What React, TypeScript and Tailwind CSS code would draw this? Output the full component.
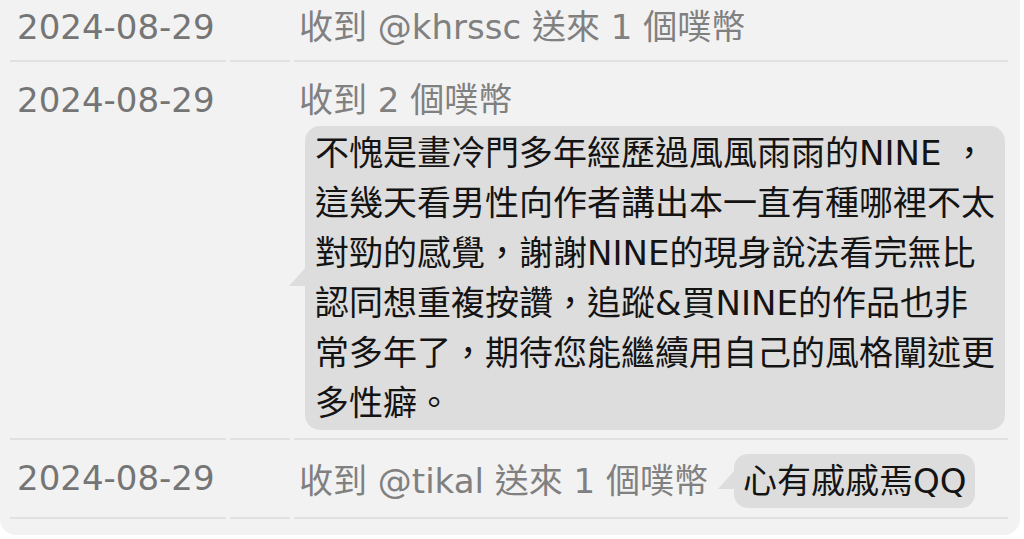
import React from "react";

const font = {
  fontFamily: '"DejaVu Sans", "Noto Sans CJK TC", sans-serif',
};

const cellBase = "border-b-2 border-[#e1e1e1]";

const Tail = () => (
  <svg
    className="absolute left-[-16px] top-[calc(50%-11px)]"
    width="17"
    height="19"
    viewBox="0 0 17 19"
  >
    <polygon points="17,0 0,19 17,19" fill="#dddddd" />
  </svg>
);

interface RowProps {
  top?: string;
  date: string;
  children: React.ReactNode;
}

const Row = ({ top = "pt-[13px]", date, children }: RowProps) => (
  <div className="flex gap-[4px] items-stretch">
    <div className={`w-[216px] shrink-0 pl-[7px] pb-[8px] ${top} ${cellBase} text-[#757575]`}>
      {date}
    </div>
    <div className={`w-[60px] shrink-0 ${cellBase}`} />
    <div className={`flex-1 min-w-0 ${cellBase}`}>{children}</div>
  </div>
);

const longText = [
  "不愧是畫冷門多年經歷過風風雨雨的NINE ，",
  "這幾天看男性向作者講出本一直有種哪裡不太",
  "對勁的感覺，謝謝NINE的現身說法看完無比",
  "認同想重複按讚，追蹤&買NINE的作品也非",
  "常多年了，期待您能繼續用自己的風格闡述更",
  "多性癖。",
];

export default function App() {
  return (
    <div className="w-[1024px] h-[539px] bg-white overflow-hidden">
      <div
        className="w-[1020px] bg-[#f2f2f2] rounded-b-[16px] pl-[10px] pr-[12px] pb-[16px] text-[34px] leading-[50px]"
        style={font}
      >
        <Row top="pt-[2px]" date="2024-08-29">
          <div className="pt-[2px] pb-[8px] pl-[5px] pr-[3px] text-[#808080]">
            收到 @khrssc 送來 1 個噗幣
          </div>
        </Row>

        <Row date="2024-08-29">
          <div className="pt-[13px] pb-[8px] pl-[5px] pr-[3px]">
            <div className="text-[#808080]">收到 2 個噗幣</div>
            <div className="relative ml-[6px] mt-[1px] rounded-[15px] bg-[#dddddd] px-[10px] py-[2px] text-[#141414]">
              <Tail />
              {longText.map((line) => (
                <div key={line} className="whitespace-pre">
                  {line}
                </div>
              ))}
            </div>
          </div>
        </Row>

        <Row date="2024-08-29">
          <div className="flex items-center pt-[14px] pb-[9px] pl-[5px] pr-[3px]">
            <span className="text-[#808080]">收到 @tikal 送來 1 個噗幣</span>
            <span className="relative ml-[26px] rounded-[14px] bg-[#dddddd] pl-[9px] pr-[8px] py-[2px] text-[#141414]">
              <Tail />
              心有戚戚焉QQ
            </span>
          </div>
        </Row>
      </div>
    </div>
  );
}
